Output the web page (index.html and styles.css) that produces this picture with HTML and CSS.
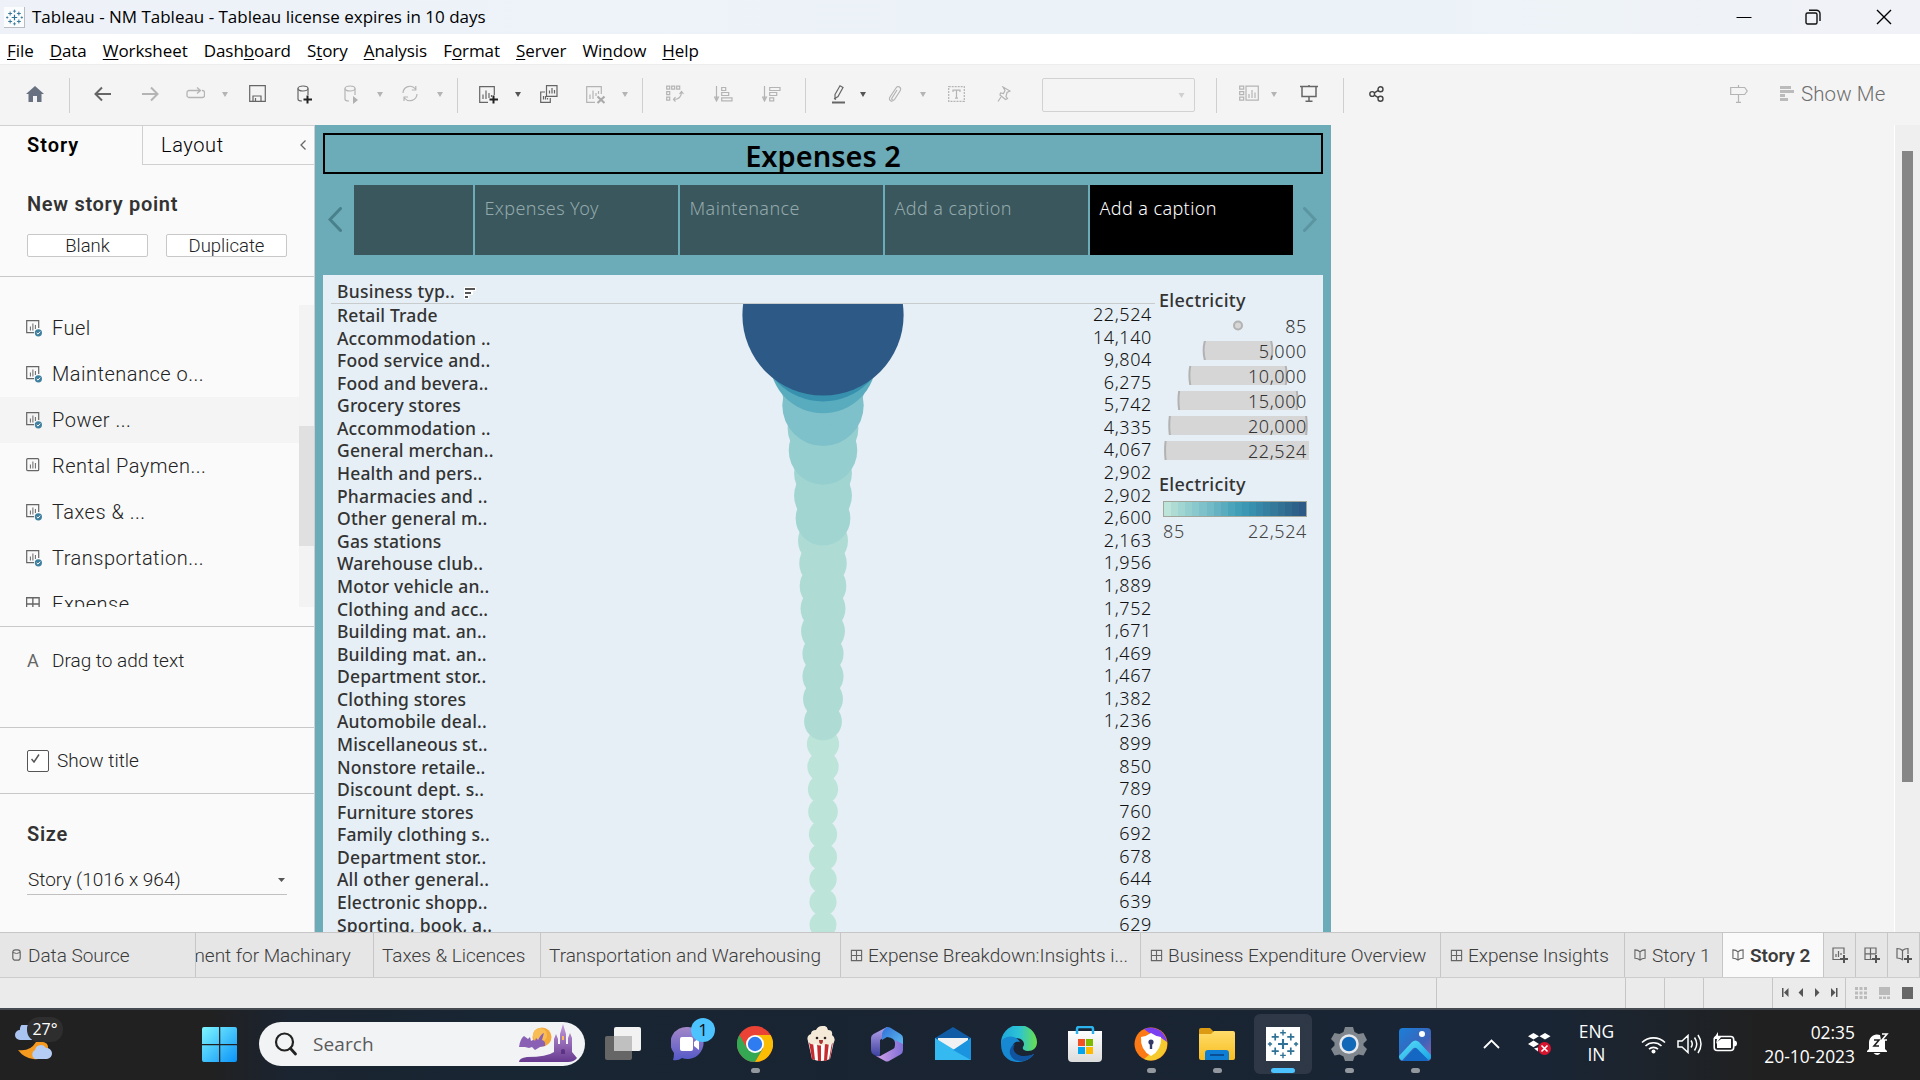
FILE: index.html
```html
<!DOCTYPE html>
<html lang="en">
<head>
<meta charset="utf-8">
<title>Tableau - NM Tableau</title>
<link rel="stylesheet" href="styles.css">
</head>
<body>
<svg class="defs" width="0" height="0">
  <defs>
    <symbol id="caret" viewBox="0 0 6 5"><path d="M0 0h6L3 5z" fill="currentColor"/></symbol>
    <symbol id="sheet" viewBox="0 0 16 17"><rect x=".7" y=".7" width="12" height="12" rx="1" fill="none" stroke="#666" stroke-width="1.2"/><path d="M4.4 6.5v4M6.9 3.5v7M9.4 5v5.500" stroke="#666" fill="none"/></symbol>
    <symbol id="sheet-used" viewBox="0 0 16 17"><path d="M8 12.700H.7V.7h12V8" fill="none" stroke="#666" stroke-width="1.200"/><path d="M4.400 6.500v4M6.900 3.500v7M9.400 5v4" stroke="#666" fill="none"/><circle cx="12.400" cy="12.800" r="3.600" fill="#3f7f9f"/><path d="M10.700 12.900l1.300 1.200 2.200-2.500" stroke="#fff" fill="none"/></symbol>
    <symbol id="dash" viewBox="0 0 14 14"><path d="M1.500 1.500h11v11h-11zM7 1.500v11M1.500 7h11" fill="none" stroke="#666" stroke-width="1.200"/></symbol>
    <symbol id="book" viewBox="0 0 13 14"><path d="M1 1.500c2.500 0 4 .5 5.500 2 1.500-1.500 3-2 5.500-2v9c-2.500 0-4 .5-5.500 2-1.500-1.500-3-2-5.500-2zM6.500 3.500v9" fill="none" stroke="#666" stroke-width="1.200"/></symbol>
    <symbol id="tableau" viewBox="0 0 24 24"><g fill="none" stroke="#2f7295"><path d="M12 8.500v7M8.500 12h7" stroke-width="1.500"/><path d="M6.500 4.500v5M4 7h5M17.500 4.500v5M15 7h5M6.500 14.500v5M4 17h5M17.500 14.500v5M15 17h5" stroke-width="1.200"/><path d="M12 2v4M10 4h4M12 18v4M10 20h4M2.800 10.500v3M1.300 12h3M21.200 10.500v3M19.700 12h3"/></g></symbol>
    <linearGradient id="gwin" x2="1" y2="1"><stop stop-color="#7ff6ff"/><stop offset="1" stop-color="#0a93f8"/></linearGradient>
    <linearGradient id="gteams" x2="0" y2="1"><stop stop-color="#a487c8"/><stop offset="1" stop-color="#5559c9"/></linearGradient>
    <linearGradient id="gedge" x2="1"><stop stop-color="#1ea7dc"/><stop offset=".5" stop-color="#2cc3d5"/><stop offset="1" stop-color="#69e04c"/></linearGradient>
    <linearGradient id="gfold" x2="0" y2="1"><stop stop-color="#ffdc6a"/><stop offset="1" stop-color="#f8bd20"/></linearGradient>
    <linearGradient id="gphoto" x2="1" y2="1"><stop stop-color="#1a7fd8"/><stop offset=".6" stop-color="#3d63b9"/><stop offset="1" stop-color="#8f5fae"/></linearGradient>
    <linearGradient id="gmount" x2="1" y2="1"><stop stop-color="#5be0f8"/><stop offset="1" stop-color="#19a3e6"/></linearGradient>
    <linearGradient id="gcastle" x2="0" y2="1"><stop stop-color="#c59bdc"/><stop offset="1" stop-color="#66398f"/></linearGradient>
    <linearGradient id="gm1" x2="0" y2="1"><stop stop-color="#b8a4ec"/><stop offset="1" stop-color="#3a3f9e"/></linearGradient>
    <linearGradient id="gm2" x2="1" y2="1"><stop stop-color="#2f6fd6"/><stop offset="1" stop-color="#63c1f2"/></linearGradient>
    <linearGradient id="gm3" x2="1" y2="0"><stop stop-color="#d4a0e8"/><stop offset="1" stop-color="#7f6fd6"/></linearGradient>
    <linearGradient id="gbag" x2="0" y2="1"><stop stop-color="#fff"/><stop offset="1" stop-color="#dcdcdc"/></linearGradient>
  </defs>
</svg>

<header class="titlebar">
  <span class="app-mark"><svg width="19" height="19"><use href="#tableau"/></svg></span>
  <span class="app-title">Tableau - NM Tableau - Tableau license expires in 10 days</span>
  <div class="win-buttons">
    <svg width="16" height="16"><path d="M.5 8.500h15" stroke="#000"/></svg>
    <svg width="16" height="16" fill="none" stroke="#111" stroke-width="1.400"><rect x="1" y="4" width="11" height="11" rx="1.500"/><path d="M4 1.200h7.500a3.500 3.500 0 0 1 3.500 3.500V12"/></svg>
    <svg width="16" height="16"><path d="M1 1l14 14M15 1L1 15" stroke="#000" stroke-width="1.400"/></svg>
  </div>
</header>

<nav class="menubar">
  <span><u>F</u>ile</span><span><u>D</u>ata</span><span><u>W</u>orksheet</span><span>Dash<u>b</u>oard</span><span>S<u>t</u>ory</span><span><u>A</u>nalysis</span><span>F<u>o</u>rmat</span><span><u>S</u>erver</span><span>Wi<u>n</u>dow</span><span><u>H</u>elp</span>
</nav>

<div class="toolbar">
  <svg width="18" height="16" viewBox="0 0 18 16"><path d="M9 0l9 8h-2.500v8H11v-6H7v6H2.500V8H0z" fill="#677180"/></svg>
  <i class="sep"></i>
  <svg class="on" width="17" height="16" viewBox="0 0 17 16"><path d="M8 1.500L1.500 8 8 14.500M1.500 8H17" stroke-width="2"/></svg>
  <svg width="17" height="16" viewBox="0 0 17 16"><path d="M9 1.500L15.500 8 9 14.500M15.500 8H0" stroke-width="2"/></svg>
  <svg width="19" height="16" viewBox="0 0 19 16"><path d="M5 11.500H3a2 2 0 0 1-2-2v-3a2 2 0 0 1 2-2h11M11 1.500l3.500 3-3.500 3M16 4.500h.5a2 2 0 0 1 2 2v3a2 2 0 0 1-2 2H5" stroke-width="1.300"/></svg>
  <svg class="caret" width="6" height="5"><use href="#caret"/></svg>
  <svg class="on" width="17" height="17" viewBox="0 0 17 17"><path d="M.7.7h15.600v15.600H.7zM4 16v-5h8v5M6.500 16v-3"/></svg>
  <svg class="on drop" width="16" height="19" viewBox="0 0 16 19"><path d="M1 3.500v10.500c0 1 1.500 2 4 2M11 3.500V10"/><ellipse cx="6" cy="3.500" rx="5" ry="2.500"/><path d="M10.500 10.500v8M6.500 14.500h8.500" stroke="#222" stroke-width="2"/></svg>
  <svg class="drop" width="16" height="19" viewBox="0 0 16 19"><path d="M1 3.500v10.500c0 1 1.500 2 4 2M11 3.500V10"/><ellipse cx="6" cy="3.500" rx="5" ry="2.500"/><path d="M9 11l5 4-5 4z" fill="#b0b0b0" stroke="none"/></svg>
  <svg class="caret" width="6" height="5"><use href="#caret"/></svg>
  <svg width="18" height="17" viewBox="0 0 18 17"><path d="M2 8a7 7 0 0 1 12.500-4M16 9a7 7 0 0 1-12.500 4M14.800 1v4h-4M3 16v-4h4"/></svg>
  <svg class="caret" width="6" height="5"><use href="#caret"/></svg>
  <i class="sep"></i>
  <svg class="on drop" width="20" height="18" viewBox="0 0 20 18"><path d="M9 16.300H.7V.7h14.600V9M4 8.500V13M7 4.500V13M10 7v5M12.500 9v2"/><path d="M14.500 9.500v8M10.500 13.500h8.500" stroke="#222" stroke-width="2"/></svg>
  <svg class="caret on" width="6" height="5"><use href="#caret"/></svg>
  <svg class="on" width="18" height="18" viewBox="0 0 18 18"><path d="M6.500.7H17v10.600H6.500zM9.500 5.500v3M12 3v5.500M14.500 5v3.500M5 7H.7v10.300h9.600V13M3.500 11v3.500M5.500 11v3.500M7.500 13v1.500"/></svg>
  <svg class="drop" width="20" height="18" viewBox="0 0 20 18"><path d="M9 16.300H.7V.7h14.600V8M4 8.500V13M7 4.500V13M10 7v3M12.500 5v3"/><path d="M11.500 10.500l7 6.500M18.500 10.500l-7 6.500" stroke="#aaa" stroke-width="2.200"/></svg>
  <svg class="caret" width="6" height="5"><use href="#caret"/></svg>
  <i class="sep"></i>
  <svg width="18" height="17" viewBox="0 0 18 17"><path d="M.7 1.200h3v3h-3zM5.700 1.200h3v3h-3zM10.700 1.200h3v3h-3zM.7 6.700h3v3h-3zM.7 12.200h3v3h-3zM15.500 6.500c0 5-2 8-8 8M13.500 9l2-2.500L17.500 9M9.500 12l-2 2.500 2 2"/></svg>
  <svg width="19" height="16" viewBox="0 0 19 16"><path d="M2.500 0v14M.5 11l2 4 2-4zM7.700 1.500h4v3h-4zM7.700 6.500h7v3h-7zM7.700 11.800H18v3H7.700z"/></svg>
  <svg width="19" height="16" viewBox="0 0 19 16"><path d="M2.500 0v14M.5 11l2 4 2-4zM7.700 1.500H18v3H7.700zM7.700 6.500h7v3h-7zM7.700 11.800h4v3h-4z"/></svg>
  <i class="sep"></i>
  <svg class="on pen" width="13" height="19" viewBox="0 0 13 19"><path d="M3 9.500L8 .8l3 1.700-5 9-3 2zM2 13.500l2 1"/><path d="M0 17.500h13" stroke-width="2"/></svg>
  <svg class="caret on" width="6" height="5"><use href="#caret"/></svg>
  <svg width="14" height="16" viewBox="0 0 14 16"><path d="M9 4l-5 8c-1 2 1.500 3 2.500 1.500L12 5c2-3.500-2-6-4-3L2 11c-1.500 2.500.5 4.500 2.500 4.300"/></svg>
  <svg class="caret" width="6" height="5"><use href="#caret"/></svg>
  <svg width="17" height="16" viewBox="0 0 17 16"><rect x=".7" y=".7" width="15.600" height="14.600" stroke-dasharray="2 1"/><path d="M5 6V4.200h7V6M8.500 4.200v8M7 12.200h3"/></svg>
  <svg width="14" height="16" viewBox="0 0 14 16"><path d="M6 1l7 4-3 1.500-1 4 1.500 2-2 1L3 9l.5-2 3 .5 1.500-3zM4 11l-3 4.500"/></svg>
  <div class="combo"><svg class="caret" width="7" height="5"><use href="#caret"/></svg></div>
  <i class="sep"></i>
  <svg width="20" height="17" viewBox="0 0 20 17"><path d="M.7 1.200h4v3h-4zM.7 6.700h4v3h-4zM.7 12.200h4v3h-4zM7 1.200h12.300v14H7zM10 9v4M13 5v8M16 7.500V13"/></svg>
  <svg class="caret" width="6" height="5"><use href="#caret"/></svg>
  <svg class="on" width="18" height="17" viewBox="0 0 18 17"><path d="M0 1.500h18M2 1.500v10h14v-10M9 0v1.500M9 11.500v4.700M5.500 16.200h7" stroke-width="1.500"/></svg>
  <i class="sep"></i>
  <svg class="on" width="15" height="16" viewBox="0 0 15 16"><g stroke-width="1.400" stroke="#444"><circle cx="3.200" cy="8" r="2.400"/><circle cx="11.500" cy="3.200" r="2.500"/><circle cx="11.500" cy="12.800" r="2.500"/><path d="M5.300 6.800l4-2.400M5.300 9.200l4 2.400"/></g></svg>
  <svg width="18" height="18" viewBox="0 0 18 18"><path d="M.7 2.500h14l2.500 3.500-2.500 3.500H.7zM8.500 0v2.500M8.500 9.500v8M6 17.300h5"/></svg>
  <div class="showme"><svg width="14" height="16" viewBox="0 0 14 16"><path d="M0 0h11v3H0zM0 4h14v3H0zM0 8h5v3H0zM0 12h8v3H0z" fill="#bbb" stroke="none"/></svg><span>Show Me</span></div>
</div>

<main class="workspace">
  <aside class="side">
    <div class="side-tabs"><b>Story</b><div class="layout-tab"><span>Layout</span><svg width="6" height="10" viewBox="0 0 6 10"><path d="M5.500.5L1 5l4.500 4.500" fill="none" stroke="#666" stroke-width="1.300"/></svg></div></div>
    <section class="newpoint"><h3>New story point</h3><div class="buttons"><span>Blank</span><span>Duplicate</span></div></section>
    <section class="sheets">
      <ul>
        <li><svg width="16" height="17"><use href="#sheet-used"/></svg>Fuel</li>
        <li><svg width="16" height="17"><use href="#sheet-used"/></svg>Maintenance o...</li>
        <li class="hover"><svg width="16" height="17"><use href="#sheet-used"/></svg>Power ...</li>
        <li><svg width="16" height="17"><use href="#sheet"/></svg>Rental Paymen...</li>
        <li><svg width="16" height="17"><use href="#sheet-used"/></svg>Taxes &amp; ...</li>
        <li><svg width="16" height="17"><use href="#sheet-used"/></svg>Transportation...</li>
        <li><svg width="16" height="17" viewBox="1 0 14 14.900"><use href="#dash" width="14" height="14"/></svg>Expense</li>
      </ul>
      <div class="track"><div class="thumb"></div></div>
    </section>
    <section class="dragtext"><span class="a">A</span><span>Drag to add text</span></section>
    <section class="showtitle"><span class="check"><svg width="9" height="9" viewBox="0 0 9 9"><path d="M.5 5l2.500 3 5-7.500" fill="none" stroke="#555" stroke-width="1.500"/></svg></span><span>Show title</span></section>
    <section class="size"><h3>Size</h3><div class="select"><span>Story (1016 x 964)</span><svg width="7" height="4" viewBox="0 0 7 4"><path d="M0 0h7L3.500 4z" fill="#555"/></svg></div></section>
  </aside>

  <div class="story">
    <h1>Expenses 2</h1>
    <div class="navigator">
      <svg width="14" height="25" viewBox="0 0 14 25"><path d="M12.500 1.500L2 12.500l10.500 11" fill="none" stroke="#48808b" stroke-width="3" stroke-linecap="round"/></svg>
      <div class="captions"><div></div><div>Expenses Yoy</div><div>Maintenance</div><div>Add a caption</div><div class="current">Add a caption</div></div>
      <svg width="14" height="25" viewBox="0 0 14 25"><path d="M1.500 1.500L12 12.500l-10.500 11" fill="none" stroke="#5b95a2" stroke-width="3" stroke-linecap="round"/></svg>
    </div>
    <div class="board">
      <div class="chart">
        <div class="chart-head"><span>Business typ..</span><svg width="12" height="12" viewBox="0 0 12 12"><path d="M0 0h12v4H9v4H5v4H0z" fill="#fff"/><path d="M1 2h10M1 6h6M1 10h3" stroke="#555" stroke-width="2"/></svg></div>
        <div class="chart-body"><div class="labels" id="labels"></div><svg id="marks" width="324" height="636"></svg><div class="values" id="values"></div></div>
      </div>
      <div class="legend">
        <h4>Electricity</h4>
        <div class="sizes" id="sizes"></div>
        <h4>Electricity</h4>
        <div class="ramp" id="ramp"></div>
        <div class="range"><span>85</span><span>22,524</span></div>
      </div>
    </div>
  </div>
  <div class="scroll"><div class="scroll-thumb"></div></div>
</main>

<div class="tabs">
  <div class="tab"><svg width="9" height="12" viewBox="0 0 9 12"><rect x=".8" y=".8" width="7.400" height="10.400" rx="2.500" fill="none" stroke="#666" stroke-width="1.200"/><path d="M1 3.500q3.500 2 7 0" fill="none" stroke="#666"/></svg>Data Source</div>
  <div class="tab cut"><span>ment for Machinary</span></div>
  <div class="tab">Taxes &amp; Licences</div>
  <div class="tab">Transportation and Warehousing</div>
  <div class="tab"><svg width="13" height="13"><use href="#dash"/></svg>Expense Breakdown:Insights i...</div>
  <div class="tab"><svg width="13" height="13"><use href="#dash"/></svg>Business Expenditure Overview</div>
  <div class="tab"><svg width="13" height="13"><use href="#dash"/></svg>Expense Insights</div>
  <div class="tab book"><svg width="12" height="14"><use href="#book"/></svg>Story 1</div>
  <div class="tab book active"><svg width="12" height="14"><use href="#book"/></svg>Story 2</div>
  <div class="tab add"><svg width="17" height="17" viewBox="0 0 17 17"><path d="M8 12.500H1V1h11v6M4 7v3M6.500 4v6M9 6v2" fill="none" stroke="#666" stroke-width="1.200"/><path d="M12 8v8M8 12h8" stroke="#555" stroke-width="2"/></svg></div>
  <div class="tab add"><svg width="17" height="17" viewBox="0 0 17 17"><path d="M8 12.500H1V1h11v6M6.500 1v11M1 6.800h11" fill="none" stroke="#666" stroke-width="1.200"/><path d="M12 8v8M8 12h8" stroke="#555" stroke-width="2"/></svg></div>
  <div class="tab add"><svg width="17" height="17" viewBox="0 0 17 17"><path d="M7 13C5 11.500 3 11 1 11V1.500c2.500 0 4 .5 5.500 2 1.500-1.500 3-2 5.500-2V7M6.500 3.500v9" fill="none" stroke="#666" stroke-width="1.200"/><path d="M12 8v8M8 12h8" stroke="#555" stroke-width="2"/></svg></div>
</div>

<div class="status">
  <i></i><i></i><i></i><i></i><i></i>
  <div class="pager"><svg width="58" height="11" viewBox="0 0 58 11" fill="#555"><path d="M0 1h1.500v9H0zM6.500 1v9L2 5.500zM21 1v9l-4.500-4.500zM33 1v9l4.500-4.500zM49 1v9l4.500-4.500zM54 1h1.500v9H54z"/></svg></div>
  <div class="views">
    <svg width="12" height="12" fill="#bbb"><path d="M0 0h3v3H0zM4.500 0h3v3h-3zM9 0h3v3H9zM0 4.500h3v3H0zM4.500 4.500h3v3h-3zM9 4.500h3v3H9zM0 9h3v3H0zM4.500 9h3v3h-3zM9 9h3v3H9z"/></svg>
    <svg width="11" height="12" fill="#bbb"><path d="M0 0h11v8H0zM0 9.500h3v2.500H0zM4 9.500h3v2.500H4zM8 9.500h3v2.500H8z"/></svg>
    <svg width="11" height="12" fill="#666"><rect width="11" height="12"/></svg>
  </div>
</div>

<footer class="taskbar">
  <div class="weather">
    <svg width="40" height="40" viewBox="0 0 40 40"><path d="M5 15a5 5 0 0 1 0-10 6 6 0 0 1 12-2v12z" fill="#a9c4f0"/><path d="M21 17q14-2 12 8-4 11-15 9Q9 33 3 25q12 2 18-8z" fill="#f59a1e"/><path d="M20 34a5 5 0 0 1 0-9 6 6 0 0 1 11-2 5.500 5.500 0 0 1 1 11z" fill="#b5cdf5"/></svg>
    <span>27°</span>
  </div>
  <svg width="35" height="35" viewBox="0 0 35 35"><path d="M2 0h15v17H0V2a2 2 0 0 1 2-2zM18.300 0H33a2 2 0 0 1 2 2v15H18.300zM0 18.300h17V35H2a2 2 0 0 1-2-2zM18.300 18.300H35V33a2 2 0 0 1-2 2H18.300z" fill="url(#gwin)"/></svg>
  <div class="search">
    <svg width="24" height="24" viewBox="0 0 24 24"><circle cx="10.500" cy="10" r="8.500" fill="none" stroke="#222" stroke-width="2.200"/><path d="M16.500 16.500l5 5.500" stroke="#222" stroke-width="2.800" stroke-linecap="round"/></svg>
    <span>Search</span>
    <svg class="castle" width="60" height="40" viewBox="0 0 60 40"><circle cx="24" cy="13" r="9.500" fill="#f4a83a"/><circle cx="22" cy="11" r="7" fill="#f9bd55"/><path d="M1 23q1-8 5-11l4 3 2-2 1 4q3-2 4 0l1-3 2 2q3-6 6-7l-2 7q4 1 3 6l-5 1-5 3-3-3-3 1-4-1z" fill="#8a60b5"/><path d="M36 28V15l2-5 2 5v5h2V10l3-10 3 10v10h2v-6l2-5 2 5v14l5 6q-3 4-9 4H1q0-4 8-5 20 0 27-5z" fill="url(#gcastle)"/><path d="M43 30v-3a2 2 0 0 1 4 0v3z" fill="#5c3285"/><path d="M44 12h2v4h-2z" fill="#f9bd55"/></svg>
  </div>
  <div class="apps">
    <div><svg width="36" height="36" viewBox="0 0 36 36"><rect y="10" width="27" height="24" rx="2" fill="#666"/><rect x="9" y="1" width="27" height="24" rx="2" fill="#f2f2f2"/><path d="M9 10h18v15H9z" fill="#c0c0c0"/></svg></div>
    <div class="chat"><svg width="36" height="36" viewBox="0 0 36 36"><path d="M17 1a16 16 0 1 1-6 31q-4 3-9 2 1-3 1-7A16 16 0 0 1 17 1z" fill="url(#gteams)"/><rect x="9" y="11" width="13" height="14" rx="2" fill="#fff"/><path d="M23 16l5-4v12l-5-4z" fill="#fff"/></svg><b>1</b></div>
    <div class="run"><svg width="36" height="36" viewBox="0 0 36 36"><circle cx="18" cy="18" r="18" fill="#ea4335"/><path d="M2.400 9A18 18 0 0 0 18 36l8-13.500H10.200z" fill="#34a853"/><path d="M18 36A18 18 0 0 0 33.600 9H18l8 13.500z" fill="#fbbc04"/><circle cx="18" cy="18" r="9" fill="#fff"/><circle cx="18" cy="18" r="7.200" fill="#2f7cf0"/></svg></div>
    <div><svg width="36" height="36" viewBox="0 0 36 36"><path d="M5 15h26l-4 18q-9 4-18 0z" fill="#fff"/><path d="M6 16l3 17 3 1-2-18zM14 16l1 19h3V16zM22 16l-1 19 3-.5L26 16zM30 16l-3 17-1 .5L29 16z" fill="#c62b30"/><path d="M5 15q-2-5 3-7 0-4 5-4 2-4 6-4 5-1 6 4 5 0 4 5 4 3 2 7-3 4-8 2-6 3-10 0-5 2-8-3z" fill="#f5ead7"/><circle cx="14" cy="12" r="1.300" fill="#322"/><circle cx="22" cy="12" r="1.300" fill="#322"/><path d="M16 14h4q0 4-2 4t-2-4z" fill="#a33"/></svg></div>
    <div><svg width="36" height="36" viewBox="0 0 36 36"><path d="M18 1L4.500 8Q2 9.500 2 12v12q0 3 2.500 4.500L8 30.500q3 1 3-3V14l9-6z" fill="url(#gm1)"/><path d="M18 1q-5 3-5 8v5l5-3q8 1 8 6l8 5V12q0-2.500-2.500-4L21 1.500q-1.500-.8-3-.5z" fill="url(#gm2)"/><path d="M34 18v6q0 3-2.500 4.500L20 35q-2 1-4 0l-9-5q4 1 6-1l11-6q2-1 2-4v-5z" fill="url(#gm3)"/></svg></div>
    <div><svg width="36" height="36" viewBox="0 0 36 36"><path d="M0 12L18 1l18 11v8H0z" fill="#0f5ba5"/><path d="M3 12h30v12H3z" fill="#f0f1f3"/><path d="M0 12l18 14L36 12v22H0z" fill="#2aa9e8"/><path d="M0 12l36 22H0z" fill="#35b9f1"/><path d="M36 12v22L18 24z" fill="#1b94df"/></svg></div>
    <div><svg width="36" height="36" viewBox="0 0 36 36"><path d="M0 18A18 18 0 0 1 36 16c0 6-4 9-9 9-4 0-6-2-5-4 3-4-1-9-7-9-8 0-15 5-15 6z" fill="url(#gedge)"/><path d="M0 18c0-8 14-11 19-2-7-2-9 5-6 10 4 6 12 6 20 2-8 12-33 12-33-10z" fill="#1689d2"/><path d="M14 18c-5 7 3 16 19 10-5 8-20 11-24 0-1-5 2-9 5-10z" fill="#10539f"/></svg></div>
    <div><svg width="36" height="36" viewBox="0 0 36 36"><path d="M1 5h34v27q0 4-4 4H5q-4 0-4-4z" fill="url(#gbag)"/><path d="M10 8V3q0-2 2-2h12q2 0 2 2v5" fill="none" stroke="#2cb3ee" stroke-width="2.500"/><path d="M11 13h7v7h-7z" fill="#f25022"/><path d="M19 13h7v7h-7z" fill="#7fba00"/><path d="M11 21h7v7h-7z" fill="#00a4ef"/><path d="M19 21h7v7h-7z" fill="#ffb900"/></svg></div>
    <div class="run"><svg width="34" height="36" viewBox="0 0 34 36"><circle cx="17" cy="18" r="16.500" fill="#fc7a15"/><path d="M10 3a16.500 16.500 0 0 1 23 16l-8-8q-8-2-15-8z" fill="#7b3ff2"/><path d="M33 16a16.500 16.500 0 0 1-23 17l12-10 4-12z" fill="#f6c92c"/><path d="M7 11q6-1 10-4 4 3 10 4 1 13-10 19Q6 24 7 11z" fill="#fff"/><circle cx="17" cy="16" r="2.600" fill="#343a67"/><path d="M15.800 16h2.400v7h-2.400z" fill="#343a67"/></svg></div>
    <div class="run"><svg width="36" height="36" viewBox="0 0 36 36"><path d="M0 4q0-2 2-2h9l4 4v6H0z" fill="#dc9b12"/><path d="M0 8h12l3-3h19q2 0 2 2v25q0 2-2 2H2q-2 0-2-2z" fill="url(#gfold)"/><path d="M6 34v-7q0-3 3-3h18q3 0 3 3v7z" fill="#0f7fd6"/><path d="M11 29h14" stroke="#0a4f95" stroke-width="2"/></svg></div>
    <div class="run focus"><svg width="34" height="34" viewBox="0 0 24 24"><path d="M0 0h24v24H0z" fill="#fff"/><use href="#tableau" width="24" height="24"/></svg></div>
    <div class="run"><svg width="36" height="36" viewBox="0 0 36 36"><path d="M14 1h8l1.500 5 4 2 5-1 3.500 7-3.500 3.500v2L36 23l-3.500 6.500-5-1-4 2L22 35h-8l-1.500-4.500-4-2-5 1L0 23l3.500-3.500v-3L0 13l3.500-6 5 1 4-2z" fill="#7f868d"/><circle cx="18" cy="18" r="8.500" fill="#1268b8" stroke="#e6eaee" stroke-width="2.500"/></svg></div>
    <div class="run"><svg width="32" height="33" viewBox="0 0 32 33"><rect width="32" height="33" rx="4" fill="url(#gphoto)"/><circle cx="23" cy="6" r="3" fill="#fff"/><path d="M4 33l12-13q3-2.500 6 0l10 9q-1 4-5 4z" fill="#1468c4"/><path d="M0 28l13-14q3.500-3 7 0l12 13v3q-1 1.500-2.500 2L18 20.500q-2-1.500-4 0L3 32.500Q0 31 0 28z" fill="url(#gmount)"/></svg></div>
  </div>
  <div class="tray">
    <svg width="17" height="10" viewBox="0 0 17 10"><path d="M1 9l7.500-7.500L16 9" fill="none" stroke="#fff" stroke-width="1.800"/></svg>
    <svg width="24" height="24" viewBox="0 0 24 24"><path d="M5.500 1L11 4.300 5.500 7.600 0 4.300zM17 1l5.500 3.300L17 7.600l-5.500-3.300zM5.500 8.600l5.500 3.300-5.500 3.300L0 11.900zM6 16.500l4-1v4z" fill="#fff"/><circle cx="16.500" cy="16.500" r="6.500" fill="#d9142f"/><path d="M13.500 13.500l6 6M19.500 13.500l-6 6" stroke="#fff" stroke-width="1.600"/></svg>
    <div class="lang">ENG<br>IN</div>
    <svg width="25" height="19" viewBox="0 0 25 19"><g fill="none" stroke="#fff" stroke-width="1.600"><path d="M1 7.500a16.500 16.500 0 0 1 23 0M4.500 11a11.500 11.500 0 0 1 16 0M8 14.200a6.500 6.500 0 0 1 9 0"/></g><circle cx="12.500" cy="16.500" r="2" fill="#fff"/></svg>
    <svg width="25" height="20" viewBox="0 0 25 20"><g fill="none" stroke="#fff" stroke-width="1.500"><path d="M1 7h4l6-5.500v17L5 13H1zM14 6.500q2.500 3.500 0 7M17.500 3.500q4.500 6.500 0 13M21 1q6 9 0 18"/></g></svg>
    <svg class="battery" width="25" height="20" viewBox="0 0 25 20"><rect x="1.200" y="4.500" width="19.500" height="14" rx="3" fill="none" stroke="#fff" stroke-width="1.600"/><path d="M4 10l4-3h10v9H4zM21 8.500q3 0 3 3t-3 3z" fill="#fff"/><path d="M5 0L.5 7H4l-1 5 5-7H5z" fill="#fff"/></svg>
    <div class="clock">02:35<br>20-10-2023</div>
    <svg width="23" height="24" viewBox="0 0 23 24"><path d="M2 17V10a8 8 0 0 1 11-7l1 5h4v9l2 2v1H0v-1zM6.500 21h7q-3 4-7 0z" fill="#fff"/><path d="M7 8h5l-5 6h5" fill="none" stroke="#202020" stroke-width="1.600"/><path d="M15 2h5l-5 6h5" fill="none" stroke="#fff" stroke-width="1.600"/></svg>
  </div>
</footer>
<script src="chart.js"></script>
</body>
</html>
```
FILE: styles.css
```css
* { box-sizing: border-box; margin: 0; padding: 0; }
body { width: 1920px; height: 1080px; overflow: hidden; display: flex; flex-direction: column; background: #f4f4f4; font: 17px "Open Sans", "Noto Sans", sans-serif; color: #000; }
svg { display: block; flex: none; }
.defs { position: absolute; }

.titlebar { height: 34px; flex: none; display: flex; align-items: center; background: linear-gradient(90deg, #eef2f8, #ebf3f8 70%, #f1f2f7); }
.app-mark { width: 21px; height: 21px; margin-left: 4px; padding: 1px; background: #fbfcfe; border-right: 1px solid #b9bdc3; border-bottom: 1px solid #b9bdc3; }
.app-title { margin-left: 7px; line-height: 34px; white-space: nowrap; letter-spacing: -.02px; }
.win-buttons { display: flex; gap: 54px; margin-left: auto; padding-right: 28px; }
.win-buttons svg:nth-child(2) { margin: 0 1px 0 -1px; }

.menubar { height: 30px; flex: none; display: flex; gap: 16px; padding: 2px 0 0 7px; background: #fff; line-height: 30px; white-space: nowrap; letter-spacing: -.06px; }
.menubar u { text-underline-offset: 2px; text-decoration-thickness: 1px; }

.toolbar { height: 61px; flex: none; padding: 0 0 3px 26px; border-top: 1px solid #ededed; background: #f4f4f4; display: grid; align-items: center; grid-template-columns: 43px 25px 48px 44px 36px 27px 48px 47px 33px 24px 36px 20px 22px 36px 25px 46px 36px 20px 24px 48px 48px 43px 27px 28px 28px 32px 28px 49px 45px 174px 23px 32px 29px 43px 26px 361px 50px auto; }
.toolbar svg { fill: none; stroke: #b4b4b4; stroke-width: 1.2; }
.toolbar svg.on { stroke: #666; }
.toolbar svg:first-child { stroke: none; }
.toolbar .drop { margin-top: 2px; }
.toolbar .pen { margin-top: 2px; }
.toolbar svg.caret { stroke: none; color: #b4b4b4; margin-top: 1px; }
.toolbar svg.caret.on { color: #555; }
.toolbar .combo svg.caret { color: #d0d0d0; }
.sep { width: 1px; height: 35px; background: #cfcfcf; margin-top: 3px; }
.combo { width: 153px; height: 34px; margin-top: 2px; border: 1px solid #d2d2d2; border-radius: 2px; display: flex; align-items: center; justify-content: flex-end; padding-right: 9px; }
.showme { display: flex; align-items: center; gap: 7px; font: 300 20.5px Roboto, sans-serif; letter-spacing: .1px; color: #6e6e6e; white-space: nowrap; }

.workspace { height: 807px; flex: none; display: flex; }
.side { width: 315px; border-top: 1px solid #d0d0d0; border-right: 1px solid #d0d0d0; background: #fafafa; font: 300 19px Roboto, sans-serif; color: #222; display: flex; flex-direction: column; }
.side section { flex: none; border-bottom: 1px solid #c8c8c8; }
.side h3 { font-size: 20px; font-weight: 600; letter-spacing: .7px; color: #333; }
.side-tabs { height: 39px; flex: none; display: flex; font-size: 20px; letter-spacing: .6px; line-height: 38px; color: #000; }
.side-tabs b { width: 142px; padding-left: 27px; font-weight: 600; letter-spacing: 1px; }
.layout-tab { flex: 1; border-left: 1px solid #d0d0d0; border-bottom: 1px solid #d0d0d0; display: flex; align-items: center; justify-content: space-between; padding: 0 8px 0 18px; }
.side .newpoint { height: 112px; padding: 27px 27px 0; }
.newpoint h3 { line-height: 24px; }
.buttons { display: flex; justify-content: space-between; margin-top: 18px; }
.buttons span { width: 121px; height: 23px; border: 1px solid #c8c8c8; border-radius: 2px; background: #fff; font-size: 18.5px; line-height: 22px; text-align: center; }
.side .sheets { height: 350px; padding: 28px 0 19px; display: flex; }
.sheets ul { width: 299px; list-style: none; overflow: hidden; }
.sheets li { height: 46px; display: flex; align-items: center; gap: 10px; padding-left: 26px; font-size: 20px; letter-spacing: .5px; white-space: nowrap; }
.sheets li.hover { background: #f4f4f4; }
.track { width: 15px; background: #f3f3f3; padding-top: 121px; }
.thumb { height: 120px; background: #e0e0e0; }
.side .dragtext { height: 101px; padding: 18px 0 0 27px; display: flex; line-height: 32px; }
.dragtext .a { width: 25px; font-size: 18px; font-weight: 400; color: #666; }
.side .showtitle { height: 66px; display: flex; align-items: center; gap: 8px; padding-left: 27px; }
.check { width: 22px; height: 22px; border: 1px solid #555; border-radius: 2px; background: #fff; padding: 3px; }
.side .size { flex: 1; border: 0; padding: 28px 27px 0; }
.size h3 { line-height: 24px; }
.select { margin-top: 15px; height: 34px; border-bottom: 1px solid #c0c0c0; display: flex; align-items: center; justify-content: space-between; padding: 4px 2px 0 1px; }

.story { width: 1016px; flex: none; background: #6cabb8; padding: 8px 8px 0; font-family: "Noto Sans", sans-serif; }
h1 { height: 41px; border: 2px solid #000; text-align: center; font-size: 29px; font-weight: 600; line-height: 41px; }
.navigator { height: 70px; margin: 11px 0 20px; display: flex; align-items: center; justify-content: space-between; padding: 0 6px 0 5px; }
.navigator > svg { margin-bottom: 2px; }
.captions { flex: none; margin-right: 10px; margin-left: 11px; height: 70px; display: grid; grid-template-columns: 119px 203px 203px 203px 203px; gap: 2px; font-size: 18px; font-weight: 300; letter-spacing: .4px; }
.captions div { background: #39575c; color: #95a9ad; padding: 11px 10px 0; line-height: 24px; white-space: nowrap; }
.captions .current { background: #000; color: #fff; }
.board { height: 657px; background: #e6eff5; display: flex; overflow: hidden; }
.chart { width: 824px; margin-left: 8px; }
.chart-head { height: 29px; border-bottom: 1px solid #c8cccc; padding: 4px 0 0 6px; display: flex; align-items: center; gap: 9px; font-size: 17.5px; font-weight: 500; letter-spacing: .25px; color: #333; line-height: 24px; }
.chart-head svg { margin-top: 3px; }
.chart-body { display: flex; }
.labels, .values { white-space: nowrap; line-height: 22.58px; }
.labels div, .values div { height: 22.58px; }
.labels { width: 330px; padding-left: 6px; font-size: 17.5px; font-weight: 500; letter-spacing: .16px; color: #333; }
.values { flex: 1; margin-top: -1px; padding-right: 3px; text-align: right; font-size: 18px; font-weight: 350; letter-spacing: .6px; color: #111; }
.legend { padding: 13px 0 0 4px; width: 156px; }
.legend h4 { font-size: 18px; font-weight: 500; letter-spacing: .3px; color: #333; line-height: 24px; }
.sizes { height: 160px; padding-top: 4px; margin-left: 3px; }
.size-row { height: 25px; display: grid; width: 147px; }
.size-row > * { grid-area: 1 / 1; }
.size-row span { text-align: right; padding-right: 2px; line-height: 20px; font-weight: 300; font-size: 18px; letter-spacing: .6px; color: #333; }
.ramp { width: 144px; height: 16px; margin: 5px 0 0 4px; border: 1px solid #a3a69b; display: flex; }
.ramp i { flex: 1; }
.range { display: flex; justify-content: space-between; width: 144px; margin: 2px 0 0 4px; font-size: 18px; font-weight: 300; letter-spacing: .6px; color: #444; }
.scroll { margin-left: auto; width: 26px; border-left: 1px solid #fff; background: #efefef; padding: 26px 0 0 7px; }
.scroll-thumb { width: 11px; height: 631px; background: #868686; }

.tabs { height: 46px; flex: none; border-top: 1px solid #c6c6c6; border-bottom: 1px solid #cdcdcd; background: #e6e6e6; display: grid; grid-template-columns: 196px 178px 167px 300px 300px 300px 184px 98px 101px 32px 32px 32px; font: 300 19px Roboto, sans-serif; letter-spacing: -.02px; color: #3c3c3c; }
.tab { border-right: 1px solid #c6c6c6; padding-left: 8px; display: flex; align-items: center; gap: 5px; white-space: nowrap; overflow: hidden; }
.tab:has(svg) { padding-left: 9px; }
.tab:first-child { padding-left: 12px; gap: 7px; }
.tab.book { gap: 6px; }
.tab.cut { padding: 0; }
.tab.cut span { margin-left: -8px; }
.tab.active { background: #fafafa; font-weight: 600; }
.tab.add { padding-left: 8px; }
.status { height: 30px; flex: none; background: #ebebeb; display: grid; grid-template-columns: 1437px 189px 39px 39px 69px 73px 75px; }
.status i { border-right: 1px solid #c6c6c6; }
.pager { padding: 9px 0 0 9px; border-right: 1px solid #c6c6c6; overflow: hidden; }
.views { display: flex; padding: 9px 0 0 9px; gap: 12px; }

.taskbar { height: 72px; flex: none; padding-bottom: 2px; border-top: 2px solid #454b50; background: linear-gradient(90deg, #212121 0, #212121 210px, #1b2431 290px, #182532 500px, #1a2432 1000px, #192535 1540px, #1e2329 1680px, #202020 1760px); display: flex; align-items: center; color: #fff; }
.weather { width: 187px; height: 68px; padding: 15px 0 0 15px; position: relative; }
.weather span { position: absolute; left: 27px; top: 7px; width: 36px; height: 25px; border-radius: 12px; background: #2e2e2e; font-size: 16px; line-height: 24px; text-align: center; }
.search { width: 326px; height: 44px; margin-left: 22px; border-radius: 22px; background: #f2f3f5; display: flex; align-items: center; padding: 0 7px 0 15px; font-size: 19px; color: #5a5a5a; }
.weather + svg { margin-left: 15px; }
.search span { margin-left: 15px; letter-spacing: .1px; }
.search .castle { margin-left: auto; }
.apps { display: flex; margin-left: 5px; }
.apps > div { width: 66px; height: 68px; display: flex; align-items: center; justify-content: center; position: relative; }
.apps .run::after { content: ""; position: absolute; left: 29px; bottom: 5px; width: 9px; height: 5px; border-radius: 3px; background: #93989f; }
.apps .focus::before { content: ""; position: absolute; left: 4px; top: 4px; width: 58px; height: 60px; border-radius: 6px; background: rgba(255, 255, 255, .09); }
.apps .focus svg { position: relative; }
.apps .focus::after { left: 21px; width: 24px; background: #4cc2ff; }
.chat b { position: absolute; left: 35px; top: 8px; width: 24px; height: 24px; border-radius: 12px; background: #4cc2ff; color: #111; font-weight: 400; font-size: 17px; line-height: 24px; text-align: center; }
.tray { margin-left: 35px; display: grid; align-items: center; grid-template-columns: 45px 46px 67px 36px 36px 36px 118px 25px; line-height: 25px; font-size: 17.4px; }
.lang { width: 45px; line-height: 23px; text-align: center; margin-top: -2px; }
.battery { margin-bottom: 4px; }
.clock { text-align: right; padding-right: 12px; line-height: 24px; }
```
FILE: chart.js
```javascript
const rows = [
  ["Retail Trade", 22524], ["Accommodation ..", 14140], ["Food service and..", 9804], ["Food and bevera..", 6275],
  ["Grocery stores", 5742], ["Accommodation ..", 4335], ["General merchan..", 4067], ["Health and pers..", 2902],
  ["Pharmacies and ..", 2902], ["Other general m..", 2600], ["Gas stations", 2163], ["Warehouse club..", 1956],
  ["Motor vehicle an..", 1889], ["Clothing and acc..", 1752], ["Building mat. an..", 1671], ["Building mat. an..", 1469],
  ["Department stor..", 1467], ["Clothing stores", 1382], ["Automobile deal..", 1236], ["Miscellaneous st..", 899],
  ["Nonstore retaile..", 850], ["Discount dept. s..", 789], ["Furniture stores", 760], ["Family clothing s..", 692],
  ["Department stor..", 678], ["All other general..", 644], ["Electronic shopp..", 639], ["Sporting, book, a..", 629]
];
const palette = ["#bce4d8", "#aedcd5", "#a1d5d2", "#95cecf", "#89c8cc", "#7ec1ca", "#72bac6", "#66b2c2", "#59acbe", "#4ba5ba",
  "#419eb7", "#3b97b3", "#3790ae", "#3788a8", "#3580a1", "#34789a", "#327094", "#30698e", "#2e6189", "#2c5985"];
const max = 22524, min = 85, pitch = 22.58;
const colour = v => palette[Math.min(19, Math.floor((v - min) / (max - min) * 20))];
const radius = v => 80.6 * Math.sqrt(v / max);

document.getElementById("labels").innerHTML = rows.map(r => `<div>${r[0]}</div>`).join("");
document.getElementById("values").innerHTML = rows.map(r => `<div>${r[1].toLocaleString("en-US")}</div>`).join("");
document.getElementById("marks").innerHTML = rows.map(([, v], i) =>
  `<circle cx="162" cy="${(11 + i * pitch).toFixed(2)}" r="${radius(v).toFixed(2)}" fill="${colour(v)}"/>`).reverse().join("");

// Size legend: circles sharing one centre line, cropped to the height of a row.
document.getElementById("sizes").innerHTML = [85, 5000, 10000, 15000, 20000, 22524].map(v => {
  const r = v === 85 ? 4 : radius(v) * .905;
  return `<div class="size-row"><svg width="147" height="19"><circle cx="76" cy="9.5" r="${r}" fill="#d6d6d6" stroke="#b2b2b2" stroke-width="2"/></svg><span>${v.toLocaleString("en-US")}</span></div>`;
}).join("");
document.getElementById("ramp").innerHTML = palette.map(c => `<i style="background:${c}"></i>`).join("");
```
